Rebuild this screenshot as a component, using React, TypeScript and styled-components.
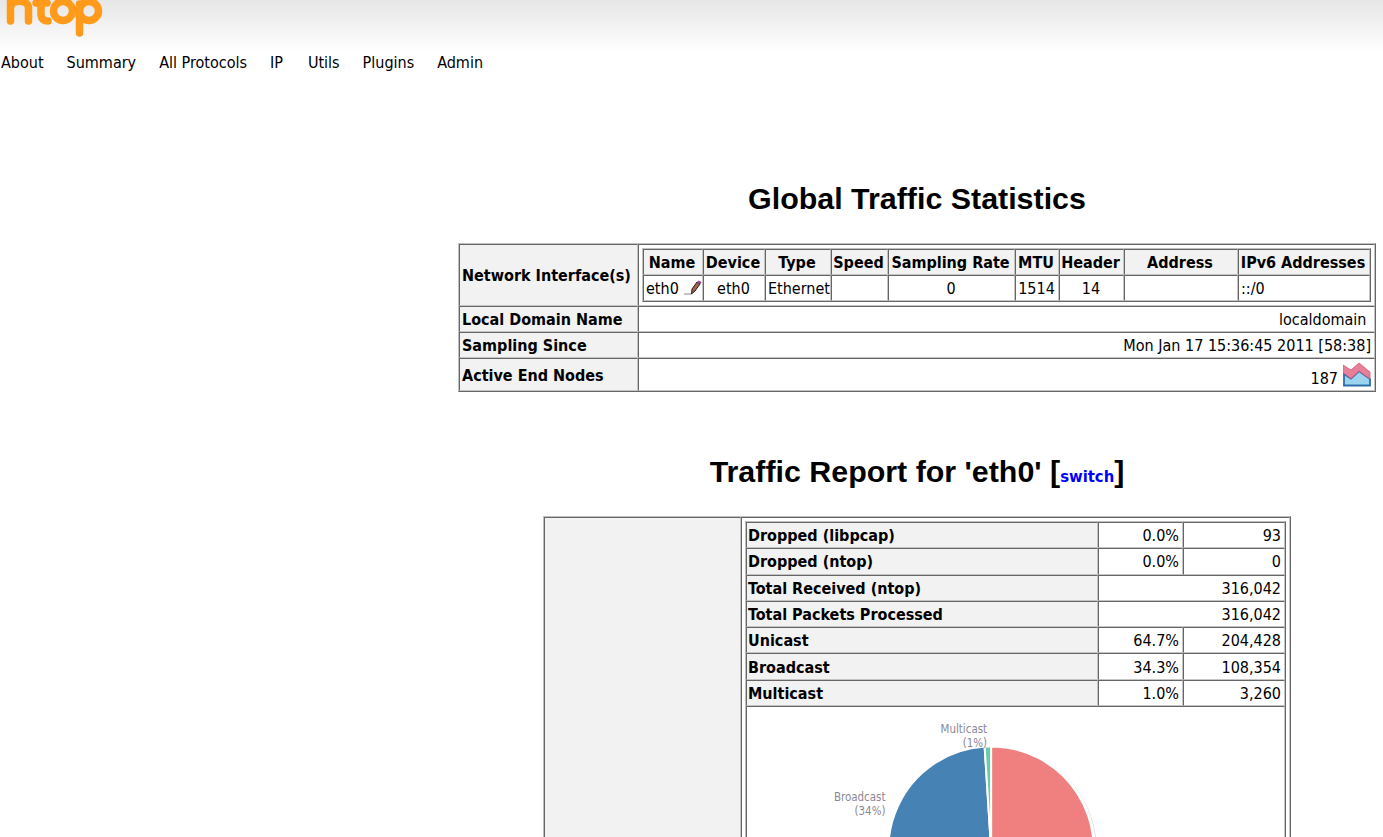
import styled, { createGlobalStyle } from "styled-components";

const GlobalStyle = createGlobalStyle`
  html, body {
    margin: 0;
    background: #fff;
    color: #000;
    font-family: "DejaVu Sans Condensed", "DejaVu Sans", sans-serif;
    font-stretch: condensed;
    font-size: 16px;
  }
`;

const Page = styled.div`
  height: 100vh;
  overflow: hidden;
`;

const Header = styled.header`
  height: 52px;
  background: linear-gradient(#e6e6e6, #fff);
  overflow: hidden;
`;

const Logo = styled.svg`
  display: block;
  width: 110px;
  height: 40px;
`;

const Nav = styled.nav`
  display: flex;
  height: 20px;
  padding: 1px 0 0 1px;
  gap: 23px;
  line-height: 20px;
`;

const NavItem = styled.span`
  white-space: nowrap;

  &:nth-child(5) {
    margin-left: 2px;
  }
`;

const Content = styled.main`
  margin-left: 451px;
  margin-top: -1px;
  text-align: center;
`;

const Title = styled.h2`
  margin: 0;
  font: bold 30.4px/36px "Liberation Sans", Arial, sans-serif;
`;

const GlobalTitle = styled(Title)`
  padding-top: 108px;
  padding-bottom: 27px;
`;

const ReportTitle = styled(Title)`
  padding-top: 61px;
  padding-bottom: 21px;
`;

const SwitchLink = styled.a`
  font-size: 16.5px;
  font-family: "DejaVu Sans Condensed", "DejaVu Sans", sans-serif;
  color: #00f;
  text-decoration: none;
`;

const Table = styled.table<{ $width: number }>`
  width: ${(p) => p.$width}px;
  margin: 0 auto;
  border-collapse: separate;
  border-spacing: 0;
  table-layout: fixed;
  border: 1px solid #666;
  border-top-color: #c0c0c0;
  border-left-color: #c0c0c0;
`;

const Cell = styled.td<{ $align?: string; $height?: number }>`
  padding: 2px 3px 0 2px;
  height: ${(p) => p.$height ?? 26}px;
  box-sizing: border-box;
  border: 1px solid #666;
  border-right-color: #c4c4c4;
  border-bottom-color: #c4c4c4;
  text-align: ${(p) => p.$align ?? "left"};
  white-space: nowrap;
  line-height: 20px;
`;

const Head = styled(Cell).attrs({ as: "th" })`
  padding-left: 1px;
  background: #f2f2f2;
  font-weight: 700;
`;

const RowHead = styled(Head)`
  padding-left: 2px;
`;

const NestCell = styled(Cell)`
  padding: 3px;
  vertical-align: top;
`;

const ChartCell = styled(Cell)`
  padding: 0;
  vertical-align: top;
`;

const Chart = styled.svg`
  display: block;
  width: 100%;
  height: 300px;
`;

const ChartLabel = styled.text`
  fill: #8b8794;
  font-size: 11.5px;
  text-anchor: end;
`;

const Pencil = () => (
  <svg width="18" height="16" viewBox="0 0 18 16" style={{ verticalAlign: -2, marginLeft: 5 }}>
    <path d="M0 14h7" stroke="#888" strokeWidth="1" />
    <path d="M7.5 14l.5-5 5-7 3 2-5 7z" fill="#a8604a" stroke="#222" strokeWidth="1" />
    <path d="M13.5 2l1-1.5 3 1.5-1 2z" fill="#a03a90" />
  </svg>
);

const TrendIcon = () => (
  <svg width="28" height="25" viewBox="0 0 28 25" style={{ marginLeft: 5, marginBottom: -3 }}>
    <path d="M1 23.5V12l7 4.5 8-7.5 11 8v6.5z" fill="#9cd4f0" stroke="#2d6ea8" strokeWidth="1.8" />
    <path d="M0 3l8 5 8-7 11 9v7L16 9l-8 7.5-8-6z" fill="#e87f98" stroke="#d05a7c" strokeWidth=".8" />
  </svg>
);

const slicePath = (cx: number, cy: number, r: number, from: number, to: number) => {
  const point = (a: number) => {
    const rad = (a * Math.PI) / 180;
    return `${cx + r * Math.sin(rad)} ${cy - r * Math.cos(rad)}`;
  };
  return `M${cx} ${cy}L${point(from)}A${r} ${r} 0 ${to - from > 180 ? 1 : 0} 1 ${point(to)}z`;
};

const ifaceCols = [60, 62, 66, 57, 127, 44, 65, 114, 132];
const ifaceHead = ["Name", "Device", "Type", "Speed", "Sampling Rate", "MTU", "Header", "Address", "IPv6 Addresses"];

const stats: [string, string, string?][] = [
  ["Dropped (libpcap)", "0.0%", "93"],
  ["Dropped (ntop)", "0.0%", "0"],
  ["Total Received (ntop)", "316,042"],
  ["Total Packets Processed", "316,042"],
  ["Unicast", "64.7%", "204,428"],
  ["Broadcast", "34.3%", "108,354"],
  ["Multicast", "1.0%", "3,260"],
];

const InterfaceTable = () => (
  <Table $width={729}>
    <colgroup>
      {ifaceCols.map((w, i) => (
        <col key={i} width={w} />
      ))}
    </colgroup>
    <tbody>
      <tr>
        {ifaceHead.map((h) => (
          <Head key={h} $align="center">
            {h}
          </Head>
        ))}
      </tr>
      <tr>
        <Cell>
          eth0
          <Pencil />
        </Cell>
        <Cell $align="center">eth0</Cell>
        <Cell $align="center">Ethernet</Cell>
        <Cell />
        <Cell $align="center">0</Cell>
        <Cell $align="center">1514</Cell>
        <Cell $align="center">14</Cell>
        <Cell />
        <Cell>::/0</Cell>
      </tr>
    </tbody>
  </Table>
);

const StatsTable = () => (
  <Table $width={541}>
    <colgroup>
      <col width={352} />
      <col width={85} />
      <col width={102} />
    </colgroup>
    <tbody>
      {stats.map(([label, a, b]) => (
        <tr key={label}>
          <Head $align="left" $height={26.3}>
            {label}
          </Head>
          {b ? (
            <>
              <Cell $align="right" $height={26.3}>
                {a}
              </Cell>
              <Cell $align="right" $height={26.3}>
                {b}
              </Cell>
            </>
          ) : (
            <Cell $align="right" $height={26.3} colSpan={2}>
              {a}
            </Cell>
          )}
        </tr>
      ))}
      <tr>
        <ChartCell colSpan={3} $height={300}>
          <Chart viewBox="0 0 539 300">
            <circle cx="246" cy="143" r="105" fill="#dcdcdc" />
            <circle cx="245" cy="142" r="105" fill="#fff" />
            <path d={slicePath(245, 142, 103, 0, 232.9)} fill="#f08080" stroke="#fff" strokeWidth="2" />
            <path d={slicePath(245, 142, 103, 232.9, 356.4)} fill="#4682b4" stroke="#fff" strokeWidth="2" />
            <path d={slicePath(245, 142, 103, 356.4, 360)} fill="#66cdaa" stroke="#fff" strokeWidth="2" />
            <ChartLabel x="241" y="26">Multicast</ChartLabel>
            <ChartLabel x="241" y="40">(1%)</ChartLabel>
            <ChartLabel x="139" y="94">Broadcast</ChartLabel>
            <ChartLabel x="139" y="108">(34%)</ChartLabel>
          </Chart>
        </ChartCell>
      </tr>
    </tbody>
  </Table>
);

export default function App() {
  return (
    <Page>
      <GlobalStyle />
      <Header>
        <Logo viewBox="0 0 110 40">
          <g fill="none" stroke="#ff9a1a" strokeWidth="7.5" strokeLinecap="round" strokeLinejoin="round">
            <path d="M10.5 21V-4M10.5 8c0-9 18-9 18 0v13" />
            <path d="M41 -6v20c0 5 3 7 7 7M36 3h11" />
            <circle cx="63" cy="11" r="9.5" />
            <circle cx="89" cy="11" r="9.5" />
            <path d="M79.5 4v29" />
          </g>
        </Logo>
      </Header>
      <Nav>
        {["About", "Summary", "All Protocols", "IP", "Utils", "Plugins", "Admin"].map((n) => (
          <NavItem key={n}>{n}</NavItem>
        ))}
      </Nav>
      <Content>
        <GlobalTitle>Global Traffic Statistics</GlobalTitle>
        <Table $width={918}>
          <colgroup>
            <col width={179} />
            <col />
          </colgroup>
          <tbody>
            <tr>
              <RowHead $align="left">Network Interface(s)</RowHead>
              <NestCell>
                <InterfaceTable />
              </NestCell>
            </tr>
            <tr>
              <RowHead $align="left">Local Domain Name</RowHead>
              <Cell $align="right">localdomain&nbsp;</Cell>
            </tr>
            <tr>
              <RowHead $align="left">Sampling Since</RowHead>
              <Cell $align="right">Mon Jan 17 15:36:45 2011 [58:38]</Cell>
            </tr>
            <tr>
              <RowHead $align="left">Active End Nodes</RowHead>
              <Cell $align="right" $height={33}>
                187
                <TrendIcon />
              </Cell>
            </tr>
          </tbody>
        </Table>
        <ReportTitle>
          Traffic Report for 'eth0' [<SwitchLink href="#">switch</SwitchLink>]
        </ReportTitle>
        <Table $width={748}>
          <colgroup>
            <col width={197} />
            <col />
          </colgroup>
          <tbody>
            <tr>
              <Head />
              <NestCell>
                <StatsTable />
              </NestCell>
            </tr>
          </tbody>
        </Table>
      </Content>
    </Page>
  );
}
